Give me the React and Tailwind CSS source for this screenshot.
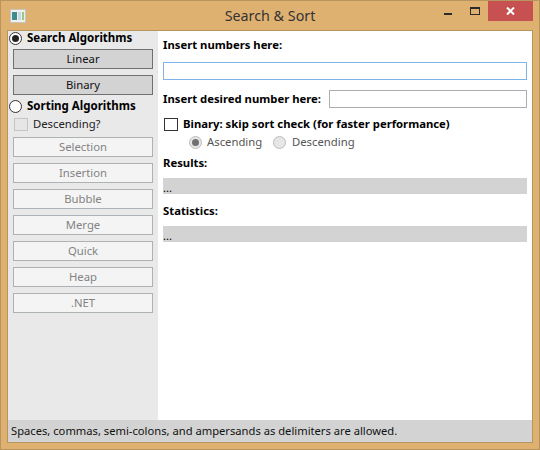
const font = { fontFamily: '"Noto Sans", sans-serif' };

function SideButton({ label, disabled }) {
  return (
    <div
      className={
        disabled
          ? 'h-[20px] w-[140px] ml-[5px] mb-[6px] flex items-center justify-center border border-[#adb2b5] bg-[#f4f4f4] text-[#838383] text-[11.3px] leading-none'
          : 'h-[20px] w-[140px] ml-[5px] mb-[6px] flex items-center justify-center border border-[#707070] bg-[#d3d3d3] text-[#111] text-[11.3px] leading-none'
      }
    >
      {label}
    </div>
  );
}

function Radio({ checked, disabled }) {
  if (disabled) {
    return (
      <span className="w-[13px] h-[13px] rounded-full border border-[#bcbcbc] bg-[#e6e6e6] flex items-center justify-center shrink-0">
        {checked && <span className="w-[7px] h-[7px] rounded-full bg-[#707070]" />}
      </span>
    );
  }
  return (
    <span className="w-[13px] h-[13px] rounded-full border border-[#333] bg-white flex items-center justify-center shrink-0">
      {checked && <span className="w-[7px] h-[7px] rounded-full bg-[#222]" />}
    </span>
  );
}

export default function App() {
  const disabledButtons = ['Selection', 'Insertion', 'Bubble', 'Merge', 'Quick', 'Heap', '.NET'];

  return (
    <div style={font} className="relative w-[540px] h-[450px] flex flex-col bg-[#dfb171] border border-[#b8945f] overflow-hidden text-[11.3px] text-black">
      <div className="h-[29px] shrink-0 flex items-center pl-[9px] pr-[6px]">
        <svg width="16" height="14" viewBox="0 0 16 14" className="mt-[1px]">
          <rect x="0.5" y="0.5" width="15" height="13" fill="#f0f0f0" stroke="#c9c4ba" />
          <rect x="2" y="3" width="5" height="8" fill="#3f8a8c" />
          <rect x="8" y="3" width="3" height="8" fill="#c3dade" />
          <rect x="12" y="3" width="2" height="8" fill="#9cc58e" />
        </svg>
        <div className="flex-1 text-center text-[14.3px] text-[#333] mr-[19px]">Search &amp; Sort</div>
      </div>

      {/* caption buttons */}
      <div className="absolute top-0 right-[6px] h-[20px] flex items-start">
        <div className="w-[26px] h-[20px] relative">
          <span className="absolute left-[7px] top-[12px] w-[8px] h-[2px] bg-[#2b2b2b]" />
        </div>
        <div className="w-[25px] h-[20px] relative">
          <span className="absolute left-[7px] top-[6px] w-[10px] h-[8px] border border-[#2b2b2b] border-t-2" />
        </div>
        <div className="w-[45px] h-[20px] bg-[#c75050] flex items-center justify-center">
          <svg width="9" height="8" viewBox="0 0 9 8">
            <path d="M1 0.5 L8 7.5 M8 0.5 L1 7.5" stroke="#fff" strokeWidth="2" />
          </svg>
        </div>
      </div>

      <div className="flex-1 mx-[6px] mb-[6px] flex flex-col border border-[#b8945f] min-h-0">
        <div className="flex-1 flex min-h-0 bg-white">
          <div className="w-[150px] shrink-0 bg-[#e9e9e9]">
            <div className="h-[14px] flex items-center pl-[1px] gap-[5px] font-bold text-[11.5px]">
              <Radio checked />
              <span>Search Algorithms</span>
            </div>
            <div className="mt-[4px]">
              <SideButton label="Linear" />
              <SideButton label="Binary" />
            </div>
            <div className="h-[14px] -mt-[2px] flex items-center pl-[1px] gap-[5px] font-bold text-[11.5px]">
              <Radio />
              <span>Sorting Algorithms</span>
            </div>
            <div className="h-[14px] mt-[4px] flex items-center pl-[6px] gap-[5px] text-[#222]">
              <span className="w-[14px] h-[13px] border border-[#c4c4c4] bg-[#e6e6e6] shrink-0" />
              <span>Descending?</span>
            </div>
            <div className="mt-[6px]">
              {disabledButtons.map((b) => (
                <SideButton key={b} label={b} disabled />
              ))}
            </div>
          </div>

          <div className="flex-1 pl-[5px] pr-[5px] pt-[5px]">
            <div className="font-bold h-[18px] leading-[18px]">Insert numbers here:</div>
            <div className="h-[18px] mt-[8px] border border-[#7eb4ea] bg-white" />
            <div className="mt-[10px] h-[18px] flex items-center justify-between">
              <span className="font-bold whitespace-nowrap">Insert desired number here:</span>
              <div className="w-[198px] h-[18px] border border-[#abadb3] bg-white" />
            </div>
            <div className="mt-[8px] h-[16px] flex items-center gap-[5px] pl-[1px] font-bold">
              <span className="w-[14px] h-[13px] border border-[#333] bg-white shrink-0" />
              <span>Binary: skip sort check (for faster performance)</span>
            </div>
            <div className="mt-[2px] h-[16px] pl-[26px] flex items-center text-[#555]">
              <Radio checked disabled />
              <span className="ml-[5px] w-[66px]">Ascending</span>
              <Radio disabled />
              <span className="ml-[6px]">Descending</span>
            </div>
            <div className="font-bold mt-[4px] h-[18px] leading-[18px]">Results:</div>
            <div className="h-[16px] mt-[6px] bg-[#d3d3d3] leading-[20px] text-[11px]">...</div>
            <div className="font-bold mt-[8px] h-[18px] leading-[18px]">Statistics:</div>
            <div className="h-[16px] mt-[6px] bg-[#d3d3d3] leading-[20px] text-[11px]">...</div>
          </div>
        </div>
        <div className="h-[22px] shrink-0 bg-[#d3d3d3] flex items-center pl-[3px] text-[#111] text-[11.2px]">
          Spaces, commas, semi-colons, and ampersands as delimiters are allowed.
        </div>
      </div>
    </div>
  );
}
